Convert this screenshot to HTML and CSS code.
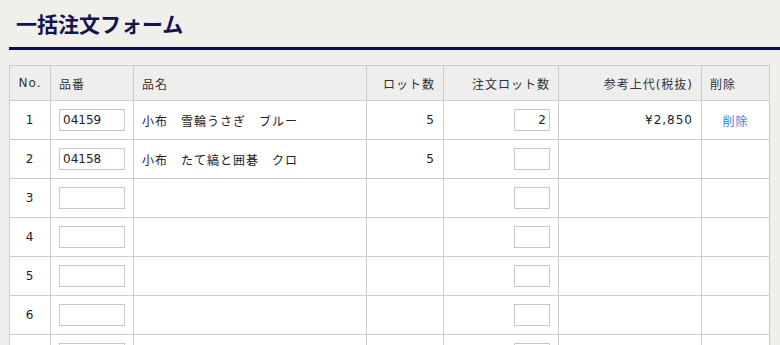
FILE: index.html
```html
<!DOCTYPE html>
<html lang="ja">
<head>
    <meta charset="UTF-8">
    <meta name="viewport" content="width=device-width, initial-scale=1.0">
    <title>一括注文フォーム</title>
    <link rel="stylesheet" href="styles.css">
</head>
<body>
    <div class="page">
        <div class="page-head">
            <h1>一括注文フォーム</h1>
        </div>

        <table class="order-table">
            <colgroup>
                <col class="c-no">
                <col class="c-code">
                <col class="c-name">
                <col class="c-lot">
                <col class="c-qty">
                <col class="c-price">
                <col class="c-del">
            </colgroup>
            <thead>
                <tr>
                    <th class="center">No.</th>
                    <th>品番</th>
                    <th>品名</th>
                    <th class="right">ロット数</th>
                    <th class="right">注文ロット数</th>
                    <th class="right">参考上代(税抜)</th>
                    <th>削除</th>
                </tr>
            </thead>
            <tbody>
                <tr>
                    <td class="center">1</td>
                    <td><input type="text" class="code-input" value="04159"></td>
                    <td>小布　雪輪うさぎ　ブルー</td>
                    <td class="right">5</td>
                    <td class="right"><input type="text" class="qty-input" value="2"></td>
                    <td class="right">¥2,850</td>
                    <td class="center"><a href="#" class="del-link">削除</a></td>
                </tr>
                <tr>
                    <td class="center">2</td>
                    <td><input type="text" class="code-input" value="04158"></td>
                    <td>小布　たて縞と囲碁　クロ</td>
                    <td class="right">5</td>
                    <td class="right"><input type="text" class="qty-input"></td>
                    <td></td>
                    <td></td>
                </tr>
                <tr>
                    <td class="center">3</td>
                    <td><input type="text" class="code-input"></td>
                    <td></td><td></td>
                    <td class="right"><input type="text" class="qty-input"></td>
                    <td></td><td></td>
                </tr>
                <tr>
                    <td class="center">4</td>
                    <td><input type="text" class="code-input"></td>
                    <td></td><td></td>
                    <td class="right"><input type="text" class="qty-input"></td>
                    <td></td><td></td>
                </tr>
                <tr>
                    <td class="center">5</td>
                    <td><input type="text" class="code-input"></td>
                    <td></td><td></td>
                    <td class="right"><input type="text" class="qty-input"></td>
                    <td></td><td></td>
                </tr>
                <tr>
                    <td class="center">6</td>
                    <td><input type="text" class="code-input"></td>
                    <td></td><td></td>
                    <td class="right"><input type="text" class="qty-input"></td>
                    <td></td><td></td>
                </tr>
                <tr>
                    <td class="center">7</td>
                    <td><input type="text" class="code-input"></td>
                    <td></td><td></td>
                    <td class="right"><input type="text" class="qty-input"></td>
                    <td></td><td></td>
                </tr>
                <tr>
                    <td class="center">8</td>
                    <td><input type="text" class="code-input"></td>
                    <td></td><td></td>
                    <td class="right"><input type="text" class="qty-input"></td>
                    <td></td><td></td>
                </tr>
            </tbody>
        </table>
    </div>
</body>
</html>
```

FILE: styles.css
```css
body {
    margin: 0;
    padding: 0;
    background: #f1efeb;
    font-family: "DejaVu Sans", "Noto Sans CJK JP", sans-serif;
    color: #222;
}
.page {
    padding-left: 9px;
}
.page-head {
    border-bottom: 3px solid #0a0a5c;
    padding: 8px 0 9px 7px;
}
.page-head h1 {
    margin: 0;
    font-family: "Noto Sans CJK JP", sans-serif;
    font-size: 21px;
    line-height: 30px;
    font-weight: bold;
    color: #15154e;
}
.order-table {
    margin-top: 15px;
    border-collapse: collapse;
    table-layout: fixed;
    width: 760px;
    background: #fff;
    font-size: 12px;
    letter-spacing: 1px;
}
.c-no { width: 41px; }
.c-code { width: 83px; }
.c-name { width: 233px; }
.c-lot { width: 77px; }
.c-qty { width: 115px; }
.c-price { width: 143px; }
.c-del { width: 68px; }

.order-table th,
.order-table td {
    border: 1px solid #cccccc;
    padding: 0 8px;
    vertical-align: middle;
    text-align: left;
    white-space: nowrap;
}
.order-table th {
    background: #eeeeee;
    font-weight: normal;
    height: 34px;
    color: #333;
}
.order-table td {
    height: 38px;
}
.order-table .center { text-align: center; }
.order-table .right { text-align: right; }

.code-input,
.qty-input {
    box-sizing: border-box;
    height: 22px;
    border: 1px solid #c8c8c8;
    padding: 0 3px;
    margin: 0;
    font-family: "DejaVu Sans", sans-serif;
    font-size: 12px;
    color: #222;
    background: #fff;
    vertical-align: middle;
}
.code-input {
    width: 66px;
}
.qty-input {
    width: 36px;
    text-align: right;
}
.del-link {
    color: #3b80d6;
    text-decoration: none;
}
```
